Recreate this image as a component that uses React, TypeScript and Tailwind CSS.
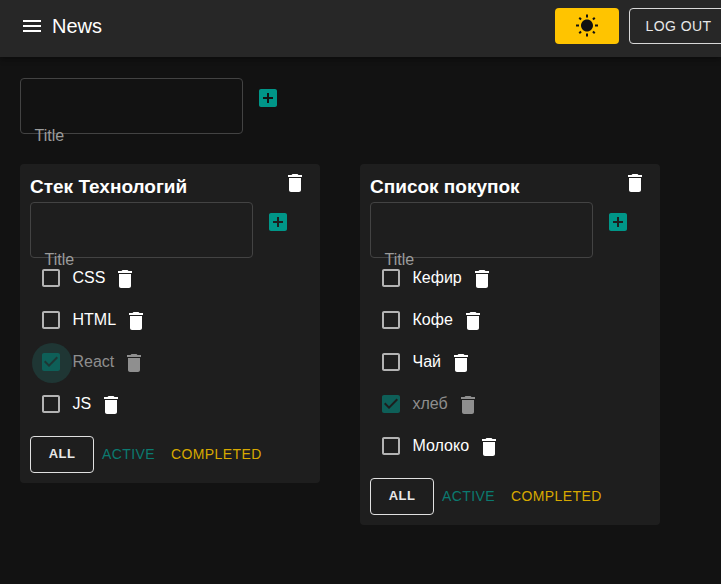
import React from "react";

const MENU = "M3 18h18v-2H3v2zm0-5h18v-2H3v2zm0-7v2h18V6H3z";
const TRASH = "M6 19c0 1.1.9 2 2 2h8c1.1 0 2-.9 2-2V7H6v12zM19 4h-3.5l-1-1h-5l-1 1H5v2h14V4z";
const ADD_BOX =
  "M19 3H5c-1.11 0-2 .9-2 2v14c0 1.1.89 2 2 2h14c1.1 0 2-.9 2-2V5c0-1.1-.9-2-2-2zm-2 10h-4v4h-2v-4H7v-2h4V7h2v4h4v2z";
const SUN =
  "M6.76 4.84l-1.8-1.79-1.41 1.41 1.79 1.79 1.42-1.41zM4 10.5H1v2h3v-2zm9-9.95h-2V3.5h2V.55zm7.45 3.91l-1.41-1.41-1.79 1.79 1.41 1.41 1.79-1.79zm-3.21 13.7l1.79 1.8 1.41-1.41-1.8-1.79-1.4 1.4zM20 10.5v2h3v-2h-3zm-8-5c-3.31 0-6 2.69-6 6s2.69 6 6 6 6-2.69 6-6-2.69-6-6-6zm-1 16.95h2V19.5h-2v2.95zm-7.45-3.91l1.41 1.41 1.79-1.8-1.41-1.41-1.79 1.8z";
const BOX_EMPTY =
  "M19 5v14H5V5h14m0-2H5c-1.1 0-2 .9-2 2v14c0 1.1.9 2 2 2h14c1.1 0 2-.9 2-2V5c0-1.1-.9-2-2-2z";
const BOX_CHECKED =
  "M19 3H5c-1.11 0-2 .9-2 2v14c0 1.1.89 2 2 2h14c1.1 0 2-.9 2-2V5c0-1.1-.9-2-2-2zm-9 14l-5-5 1.41-1.41L10 14.17l7.59-7.59L19 8l-9 9z";

const Icon = ({ d, className }: { d: string; className?: string }) => (
  <svg viewBox="0 0 24 24" fill="currentColor" className={`w-6 h-6 shrink-0 ${className ?? ""}`}>
    <path d={d} />
  </svg>
);

const AddItemForm = () => (
  <div className="flex items-start">
    <div className="relative w-[223px] h-14 shrink-0">
      <input className="w-full h-full rounded border border-[#434343] bg-transparent outline-none" />
      <span className="absolute left-[14.5px] top-[50px] text-base leading-4 text-[#9b9b9b] pointer-events-none">
        Title
      </span>
    </div>
    <Icon d={ADD_BOX} className="ml-[13px] mt-2 text-[#009688]" />
  </div>
);

type Task = { title: string; done?: boolean; ripple?: boolean };

const TaskRow = ({ title, done, ripple }: Task) => (
  <li className="flex items-center h-[42px]">
    <div className="relative w-[42.5px] h-[42px] flex items-center justify-start pl-[9px] shrink-0">
      {ripple && <div className="absolute left-[2px] top-[1.5px] w-10 h-10 rounded-full bg-[#1f3634]" />}
      {done ? (
        <Icon d={BOX_CHECKED} className="relative text-[#0e5f58]" />
      ) : (
        <Icon d={BOX_EMPTY} className="text-[#b3b3b3]" />
      )}
    </div>
    <span className={`text-base leading-6 ${done ? "text-[#8e8e8e]" : "text-white"}`}>{title}</span>
    <Icon d={TRASH} className={`ml-2 mt-px ${done ? "text-[#8f8f8f]" : "text-white"}`} />
  </li>
);

const TodoCard = ({ title, tasks }: { title: string; tasks: Task[] }) => (
  <section className="w-[300px] p-2.5 rounded bg-[#1e1e1e] shrink-0">
    <div className="flex justify-between h-7">
      <h3 className="text-[19px] font-bold leading-[26px] text-white">{title}</h3>
      <Icon d={TRASH} className="-mt-[3px] mr-[3px] text-white" />
    </div>
    <AddItemForm />
    <ul className="-mt-px">
      {tasks.map((t) => (
        <TaskRow key={t.title} {...t} />
      ))}
    </ul>
    <div className="flex items-center mt-[11px] text-sm font-medium tracking-[0.4px]">
      <button className="w-16 h-[37px] pb-px rounded border border-[#e0e0e0] text-[13px] font-semibold text-[#e8e8e8]">ALL</button>
      <button className="ml-2 -mt-px text-[#0b7a70]">ACTIVE</button>
      <button className="ml-4 -mt-px text-[#d7a900]">COMPLETED</button>
    </div>
  </section>
);

export default function App() {
  return (
    <div className="h-[584px] overflow-hidden bg-[#121212] font-['Liberation_Sans',Arial,sans-serif]">
      <header className="h-[57px] flex items-start pl-[20px] pt-2 bg-[#272727] text-white shadow-[0_2px_4px_-1px_rgba(0,0,0,0.2),0_4px_5px_0_rgba(0,0,0,0.14)]">
        <Icon d={MENU} className="mt-1.5" />
        <span className="ml-2 mt-0.5 text-xl leading-8">News</span>
        <div className="ml-auto flex items-start gap-2.5 shrink-0 -mr-[7px]">
          <button className="w-16 h-9 flex items-center justify-center rounded bg-[#ffc400] text-[#121212]">
            <Icon d={SUN} />
          </button>
          <button className="w-[99px] h-9 rounded border border-[#d8d8d8] text-sm tracking-[0.4px] text-[#e8e8e8]">
            LOG OUT
          </button>
        </div>
      </header>
      <main className="pt-[21px] px-5">
        <AddItemForm />
        <div className="flex items-start gap-10 mt-[30px]">
          <TodoCard
            title="Стек Технологий"
            tasks={[{ title: "CSS" }, { title: "HTML" }, { title: "React", done: true, ripple: true }, { title: "JS" }]}
          />
          <TodoCard
            title="Список покупок"
            tasks={[
              { title: "Кефир" },
              { title: "Кофе" },
              { title: "Чай" },
              { title: "хлеб", done: true },
              { title: "Молоко" },
            ]}
          />
        </div>
      </main>
    </div>
  );
}
